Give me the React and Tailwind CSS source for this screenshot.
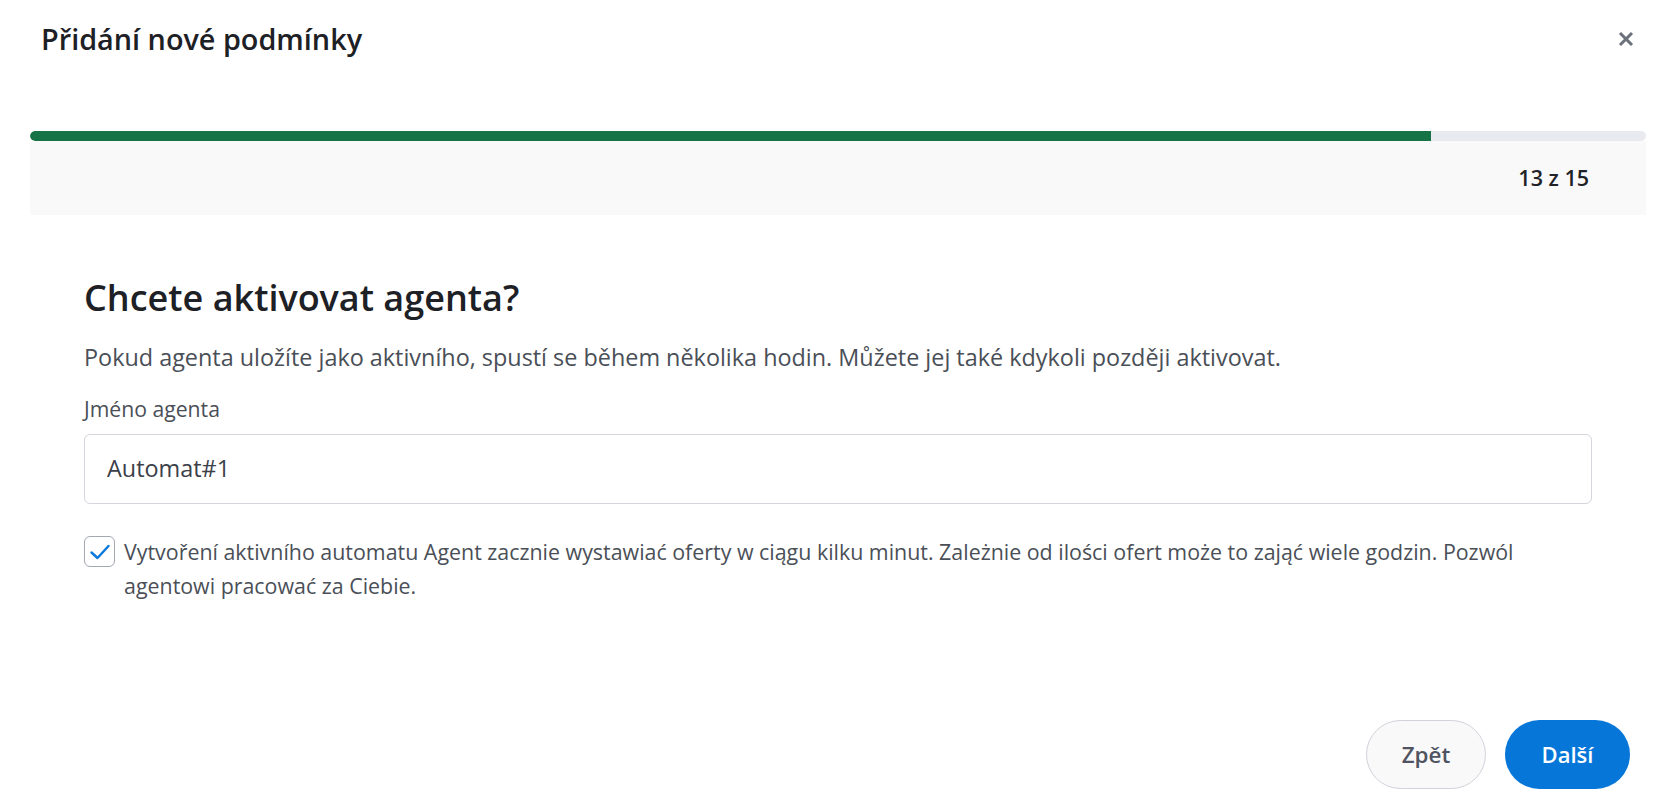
import React from "react";

export default function App() {
  return (
    <div className="h-[804px] w-full bg-white flex flex-col text-[#1f2328]" style={{ fontFamily: '"Open Sans", "Noto Sans", sans-serif' }}>
      <div className="flex items-center justify-between h-[78px] pl-[41px] pr-[46px]">
        <h1 className="text-[28.8px] font-semibold leading-none text-[#1d2025]">Přidání nové podmínky</h1>
        <button className="w-[16px] h-[16px] flex items-center justify-center text-[#6b717b]">
          <svg viewBox="0 0 16 16" width="16" height="16" fill="none" stroke="currentColor" strokeWidth="3" strokeLinecap="butt">
            <path d="M2 2 L14 14 M14 2 L2 14" />
          </svg>
        </button>
      </div>

      <div className="ml-[30px] mr-[34px] mt-[53px] flex flex-col">
        <div className="h-[10px] rounded-full bg-[#e9eaef] overflow-hidden">
          <div className="h-full w-[86.67%] bg-[#167346] rounded-l-full" />
        </div>
        <div className="h-[74px] bg-[#f9f9f9] flex items-center justify-end pr-[57px]">
          <span className="text-[21.5px] font-semibold text-[#1f2328]">13 z 15</span>
        </div>
      </div>

      <div className="pl-[84px] pr-[88px] pt-[61px] flex flex-col">
        <h2 className="text-[36px] font-semibold leading-[44px] text-[#1d2025]">Chcete aktivovat agenta?</h2>
        <p className="mt-[21px] text-[23.4px] leading-[32px] text-[#4a4f57]">
          Pokud agenta uložíte jako aktivního, spustí se během několika hodin. Můžete jej také kdykoli později aktivovat.
        </p>
        <label className="mt-[21px] text-[21.2px] leading-[30px] text-[#4a4f57]">Jméno agenta</label>
        <div className="mt-[10px] h-[70px] rounded-[6px] border border-[#d3d6dc] flex items-center px-[22px] text-[23.4px] text-[#3c4048]">
          Automat#1
        </div>
        <div className="mt-[31px] flex items-start gap-[9px]">
          <div className="mt-[1px] shrink-0 w-[31px] h-[31px] rounded-[6px] border border-[#a3a8b1] flex items-center justify-center text-[#0a78dc]">
            <svg viewBox="0 0 22 22" width="22" height="22" fill="none" stroke="currentColor" strokeWidth="2.4" strokeLinecap="round" strokeLinejoin="round">
              <path d="M2.5 11.5 L8.5 17 L19.5 5" />
            </svg>
          </div>
          <p className="text-[21.4px] leading-[34px] text-[#4a4f57]">
            Vytvoření aktivního automatu Agent zacznie wystawiać oferty w ciągu kilku minut. Zależnie od ilości ofert może to zająć wiele godzin. Pozwól agentowi pracować za Ciebie.
          </p>
        </div>
      </div>

      <div className="mt-auto flex justify-end gap-[19px] pr-[50px] pb-[15px]">
        <button className="w-[120px] h-[69px] rounded-full border border-[#d0d3da] bg-[#f9f9fa] text-[22.4px] font-semibold text-[#4f5460]">Zpět</button>
        <button className="w-[125px] h-[69px] rounded-full bg-[#0677d9] text-[22px] font-semibold text-white">Další</button>
      </div>
    </div>
  );
}
